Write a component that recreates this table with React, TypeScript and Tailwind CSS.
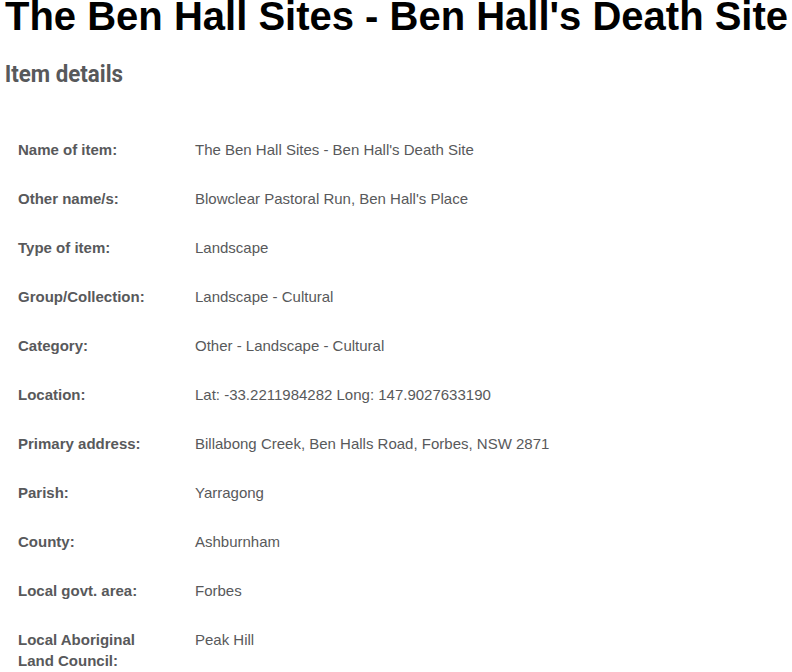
import React from "react";

const rows: [string, string][] = [
  ["Name of item:", "The Ben Hall Sites - Ben Hall's Death Site"],
  ["Other name/s:", "Blowclear Pastoral Run, Ben Hall's Place"],
  ["Type of item:", "Landscape"],
  ["Group/Collection:", "Landscape - Cultural"],
  ["Category:", "Other - Landscape - Cultural"],
  ["Location:", "Lat: -33.2211984282 Long: 147.9027633190"],
  ["Primary address:", "Billabong Creek, Ben Halls Road, Forbes, NSW 2871"],
  ["Parish:", "Yarragong"],
  ["County:", "Ashburnham"],
  ["Local govt. area:", "Forbes"],
  ["Local Aboriginal Land Council:", "Peak Hill"],
];

export default function App() {
  return (
    <div className="w-[792px] h-[672px] overflow-hidden bg-white font-['Liberation_Sans',Arial,sans-serif]">
      <h1 className="m-0 pl-[5px] pt-0 text-[40px] leading-[32px] font-bold text-black whitespace-nowrap">
        The Ben Hall Sites - Ben Hall's Death Site
      </h1>
      <h2 className="mt-[27px] pl-[5px] text-[24px] leading-[30px] font-bold text-[#58595b] font-['Roboto',sans-serif] origin-left scale-x-[0.93]">
        Item details
      </h2>
      <div className="mt-[36px] pl-[18px]">
        {rows.map(([label, value]) => (
          <div key={label} className="grid grid-cols-[177px_1fr] py-[14px] text-[15px] leading-[21px] text-[#58595b]">
            <div className="font-bold w-[130px]">{label}</div>
            <div>{value}</div>
          </div>
        ))}
      </div>
    </div>
  );
}
